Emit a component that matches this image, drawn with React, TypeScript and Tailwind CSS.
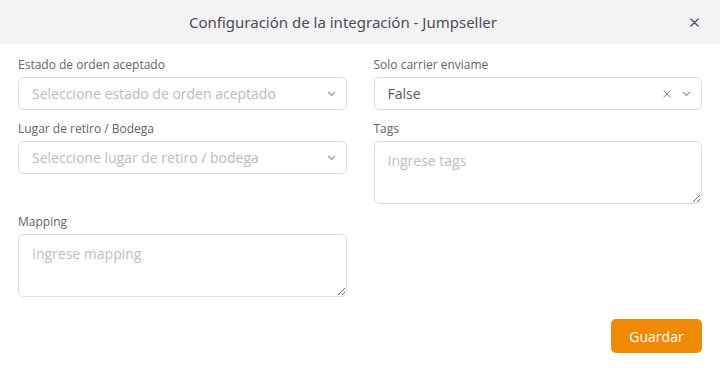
import React from "react";

const Chevron = () => (
  <svg width="9" height="6" viewBox="0 0 9 6" fill="none" stroke="#8a8a96" strokeWidth="1.1" strokeLinecap="round" strokeLinejoin="round">
    <path d="M1.3 1.3 L4.5 4.3 L7.7 1.3" />
  </svg>
);

const SmallX = ({ size = 9, color = "#7a7a86", sw = 1.2 }: { size?: number; color?: string; sw?: number }) => (
  <svg width={size} height={size} viewBox="0 0 10 10" fill="none" stroke={color} strokeWidth={sw} strokeLinecap="round">
    <path d="M1 1 L9 9 M9 1 L1 9" />
  </svg>
);

const Label = ({ children }: { children: React.ReactNode }) => (
  <div className="text-[12px] leading-[16px] text-[#62626e] mb-[4px]">{children}</div>
);

const SelectBox = ({ placeholder, value }: { placeholder?: string; value?: string }) => (
  <div className="h-[33px] border border-[#dcdce2] rounded-[5px] flex items-center pl-[13px] pr-[10px] bg-white">
    <div className={"flex-1 text-[14px] " + (value ? "text-[#55555f]" : "text-[#babac3]")}>{value ?? placeholder}</div>
    {value ? (
      <div className="mr-[11px] flex items-center"><SmallX size={8} color="#80808c" /></div>
    ) : null}
    <div className="flex items-center"><Chevron /></div>
  </div>
);

const Area = ({ placeholder }: { placeholder: string }) => (
  <textarea
    placeholder={placeholder}
    className="block w-full h-[63px] border border-[#dcdce2] rounded-[5px] px-[13px] pt-[8px] text-[14px] text-[#55555f] placeholder:text-[#bdbdc5] outline-none resize-y"
  />
);

export default function App() {
  return (
    <div className="w-[720px] h-[373px] bg-white" style={{ fontFamily: "'Open Sans', 'Liberation Sans', sans-serif" }}>
      <div className="h-[44px] bg-[#f3f3f3] flex items-center relative">
        <div className="flex-1 text-center text-[15px] text-[#4b4b5c] pr-[34px]" style={{ fontFamily: "'Noto Sans', sans-serif" }}>
          Configuración de la integración - Jumpseller
        </div>
        <div className="absolute right-[21px] top-[18px]"><SmallX size={9} color="#555570" sw={1.6} /></div>
      </div>
      <div className="px-[18px] pt-[13px]">
        <div className="grid grid-cols-2 gap-x-[27px] gap-y-[11px] items-start">
          <div>
            <Label>Estado de orden aceptado</Label>
            <SelectBox placeholder="Seleccione estado de orden aceptado" />
          </div>
          <div>
            <Label>Solo carrier enviame</Label>
            <SelectBox value="False" />
          </div>
          <div>
            <Label>Lugar de retiro / Bodega</Label>
            <SelectBox placeholder="Seleccione lugar de retiro / bodega" />
          </div>
          <div>
            <Label>Tags</Label>
            <Area placeholder="Ingrese tags" />
          </div>
          <div className="-mt-px">
            <Label>Mapping</Label>
            <Area placeholder="Ingrese mapping" />
          </div>
          <div />
        </div>
        <div className="flex justify-end mt-[22px]">
          <button className="w-[91px] h-[34px] rounded-[5px] bg-[#f08a05] text-white text-[14px] font-medium">Guardar</button>
        </div>
      </div>
    </div>
  );
}
